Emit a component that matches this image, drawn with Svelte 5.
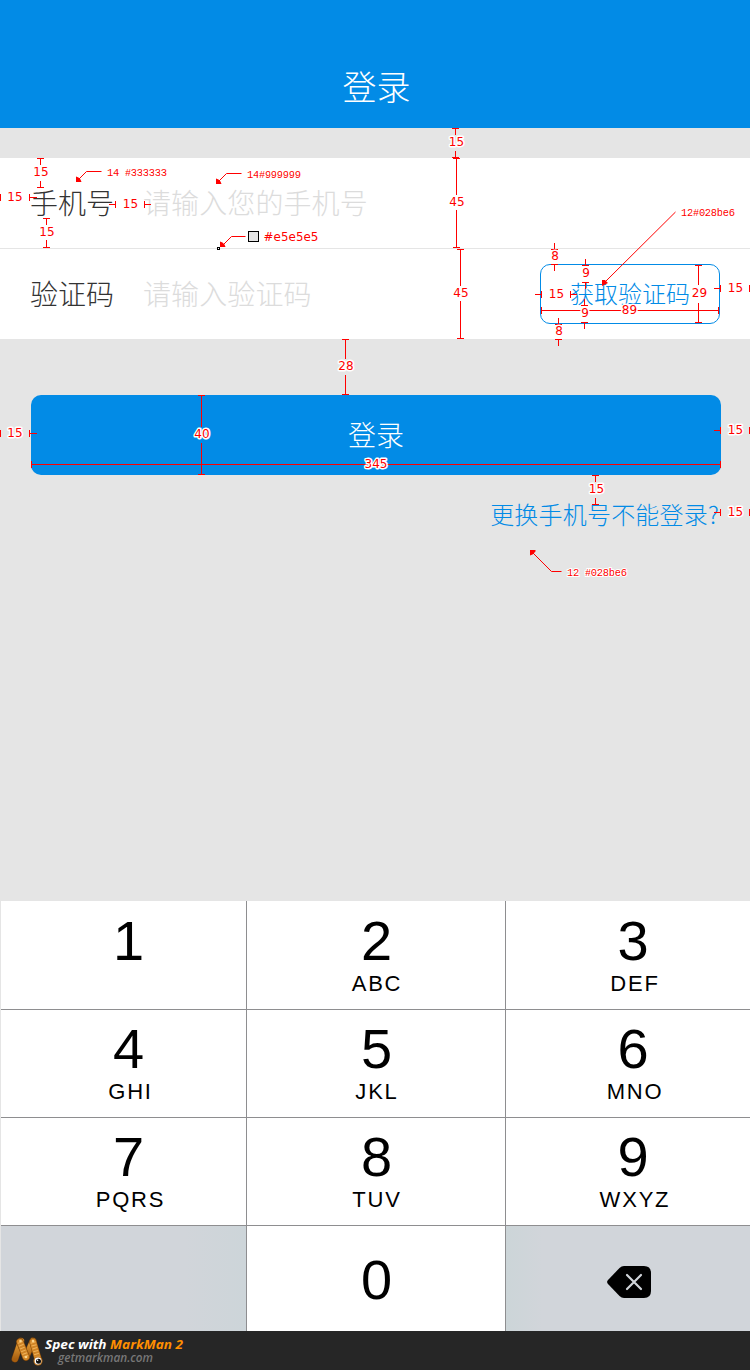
<script>
  const keys = [
    ['1', ''], ['2', 'ABC'], ['3', 'DEF'],
    ['4', 'GHI'], ['5', 'JKL'], ['6', 'MNO'],
    ['7', 'PQRS'], ['8', 'TUV'], ['9', 'WXYZ'],
  ];

  // Horizontal ticks and bars: [x, y, width, height]
  const strokes = [
    [37, 158, 7, 1], [40, 158, 1, 7], [40, 181, 1, 7], [37, 187, 7, 1],
    [0, 194, 1, 7], [29, 194, 1, 7], [29, 197, 8, 1],
    [109, 204, 7, 1], [115, 201, 1, 7], [144, 201, 1, 7], [144, 204, 7, 1],
    [43, 218, 7, 1], [46, 218, 1, 7], [46, 240, 1, 8], [43, 247, 7, 1],
    [452, 128, 7, 1], [455, 128, 1, 7], [455, 151, 1, 7], [452, 157, 7, 1],
    [453, 158, 7, 1], [456, 158, 1, 37], [456, 210, 1, 38], [453, 247, 7, 1],
    [457, 249, 7, 1], [460, 249, 1, 37], [460, 301, 1, 38], [457, 338, 7, 1],
    [554, 243, 1, 7], [551, 249, 7, 1], [551, 264, 7, 1], [554, 264, 1, 7],
    [585, 259, 1, 7], [582, 265, 7, 1], [582, 282, 7, 1], [585, 282, 1, 7],
    [584, 299, 1, 7], [581, 305, 7, 1], [581, 322, 7, 1], [584, 322, 1, 7],
    [558, 318, 1, 7], [555, 324, 7, 1], [555, 339, 7, 1], [558, 339, 1, 7],
    [535, 294, 7, 1], [541, 291, 1, 7], [570, 291, 1, 7], [570, 294, 7, 1],
    [541, 307, 1, 7], [541, 310, 178, 1], [718, 307, 1, 7],
    [695, 265, 7, 1], [698, 265, 1, 20], [698, 303, 1, 20], [695, 322, 7, 1],
    [714, 288, 7, 1], [720, 285, 1, 7], [749, 285, 1, 7],
    [342, 339, 7, 1], [345, 339, 1, 20], [345, 375, 1, 20], [342, 394, 7, 1],
    [198, 395, 7, 1], [201, 396, 1, 31], [201, 443, 1, 31], [198, 474, 7, 1],
    [31, 461, 1, 7], [31, 464, 690, 1], [720, 461, 1, 7],
    [0, 430, 1, 7], [29, 430, 1, 7], [29, 433, 8, 1],
    [714, 430, 7, 1], [720, 427, 1, 7], [749, 427, 1, 7],
    [592, 475, 7, 1], [595, 475, 1, 7], [595, 498, 1, 7], [592, 504, 7, 1],
    [714, 512, 7, 1], [720, 509, 1, 7], [749, 509, 1, 7],
  ];

  // Dimension values: [centre x, baseline, text]
  const values = [
    [41, 176, 15], [15, 201, 15], [130.5, 208, 15], [47, 236, 15],
    [456.5, 146, 15], [457, 206, 45], [461, 297, 45],
    [555, 260, 8], [586, 277, 9], [585, 317, 9], [559, 335, 8],
    [556.5, 298, 15], [629.5, 314, 89], [699.5, 297, 29], [735.5, 292, 15],
    [346, 370, 28], [202, 438, 40], [376, 468, 345],
    [15, 437, 15], [735.5, 434, 15], [596.5, 493, 15], [735.5, 516, 15],
  ];

  // Type notes: [x, baseline, width, text]
  const notes = [
    [107, 176, 60, '14 #333333'],
    [247, 178, 54, '14#999999'],
    [681, 216, 54, '12#028be6'],
    [567, 576, 60, '12 #028be6'],
  ];
</script>

<div class="page">
  <header>登录</header>

  <section class="form">
    <div class="row">
      <span class="label">手机号</span>
      <span class="hint">请输入您的手机号</span>
    </div>
    <div class="row">
      <span class="label">验证码</span>
      <span class="hint">请输入验证码</span>
      <button class="code">获取验证码</button>
    </div>
  </section>

  <button class="login">登录</button>
  <a class="help" href="#help">更换手机号不能登录?</a>

  <section class="keypad">
    {#each keys as [digit, letters]}
      <div class="key"><b>{digit}</b><i>{letters}</i></div>
    {/each}
    <div class="key blank"></div>
    <div class="key zero"><b>0</b></div>
    <div class="key blank del">
      <svg width="44" height="32" viewBox="0 0 44 32">
        <path d="M17 0H37Q44 0 44 7V25Q44 32 37 32H17Q14.500 32 12.500 30L1 18Q-.8 16 1 14L12.500 2Q14.500 0 17 0Z" />
        <path class="cross" d="M20 9L34 23M34 9L20 23" />
      </svg>
    </div>
  </section>

  <footer>
    <svg class="logo" width="32" height="29" viewBox="0 0 32 29">
      <defs>
        <linearGradient id="worm" x1="0" y1="0" x2="0" y2="1">
          <stop offset="0" stop-color="#e9a53c" />
          <stop offset="1" stop-color="#a85f10" />
        </linearGradient>
      </defs>
      <g fill="none" stroke-linecap="round">
        <path d="M4 22L10 4M22 4L15 20" stroke="#7a420a" stroke-width="7" />
        <path d="M4 22L10 4" stroke="url(#worm)" stroke-width="6" />
        <path d="M15 20L22 4" stroke="url(#worm)" stroke-width="6" />
        <path d="M9 5L15 20M22 5L27 22" stroke="#7a420a" stroke-width="7.500" />
        <path d="M9 5L15 20M22 5L27 22" stroke="#cf8426" stroke-width="6.500" />
        <path d="M9 5L15 20M22 5L27 22" stroke="#efb25a" stroke-width="5" stroke-dasharray="1 2" stroke-linecap="butt" />
      </g>
      <circle cx="9.500" cy="4" r="1.300" fill="#fbd58c" />
      <circle cx="22" cy="4" r="1.300" fill="#fbd58c" />
      <circle cx="15" cy="20" r="1.300" fill="#fbd58c" />
      <circle cx="27" cy="24" r="4.500" fill="#b56c18" />
      <circle cx="27" cy="24" r="3.400" fill="#fff" />
      <circle cx="27.500" cy="24.300" r="2.500" fill="#111" />
      <circle cx="26.600" cy="23.300" r=".7" fill="#fff" />
    </svg>
    <div class="credit">
      <svg width="150" height="32">
        <text x="2" y="13" class="spec" textLength="138" lengthAdjust="spacingAndGlyphs">Spec with <tspan>MarkMan 2</tspan></text>
        <text x="15" y="25.500" class="site" textLength="95" lengthAdjust="spacingAndGlyphs">getmarkman.com</text>
      </svg>
    </div>
  </footer>

  <svg class="spec-layer" width="750" height="600">
    <g shape-rendering="crispEdges">
      {#each strokes as [x, y, w, h]}
        <rect {x} {y} width={w} height={h} />
      {/each}
    </g>
    <g class="leader">
      <path d="M101.500 171.500H86.500L79 179M241.500 173.500H226.500L219 181M245.500 236.500H231.500L223 245M675.500 212L605 282M561.500 571.500H551.500L533 553" />
    </g>
    <path d="M76 176.500V182H81.500L80.500 179.500L78.500 177.500ZM216 178.500V184H221.500L220.500 181.500L218.500 179.500ZM220 241.500V247H225.500L224.500 244.500L222.500 242.500ZM602 280V286L608 283L605 280ZM530 550V555.500L532.500 554.500L535.500 551.500V550Z" />
    <rect class="box" x="248.500" y="231.500" width="10" height="10" />
    <rect class="box dot" x="217.500" y="247.500" width="2" height="2" />
    {#each values as [x, y, t]}
      <text class="value" {x} {y}>{t}</text>
    {/each}
    <text class="value start" x="263.500" y="241" textLength="55">#e5e5e5</text>
    {#each notes as [x, y, w, t]}
      <text class="note" {x} {y} textLength={w}>{t}</text>
    {/each}
  </svg>
</div>

<style>
  :global(body) { margin: 0; background: #e5e5e5; }
  .page {
    position: relative;
    display: flex;
    flex-direction: column;
    width: 750px;
    height: 1370px;
    overflow: hidden;
    background: #e5e5e5;
    font-family: "Noto Sans CJK SC", sans-serif;
    font-weight: 300;
  }
  header {
    height: 128px;
    box-sizing: border-box;
    padding: 46px 0 0 3px;
    line-height: 80px;
    text-align: center;
    color: #fff;
    background: #028be6;
    font-size: 34px;
  }
  .form { margin-top: 30px; background: #fff; }
  .row {
    display: flex;
    align-items: center;
    height: 90px;
    padding: 0 30px;
    font-size: 28px;
    line-height: 38px;
  }
  .row + .row { border-top: 1px solid #e5e5e5; }
  .label, .hint { padding-bottom: 2px; }
  .label { width: 113px; color: #333; }
  .hint { flex: 1; color: #dcdcdc; letter-spacing: .1px; }
  button { font-family: inherit; font-weight: inherit; cursor: pointer; }
  .code {
    width: 180px;
    height: 60px;
    padding: 0 0 4px;
    border: 1px solid #028be6;
    border-radius: 10px;
    background: #fff;
    color: #028be6;
    font-size: 24px;
  }
  .login {
    flex: none;
    width: 690px;
    height: 80px;
    margin: 56px 0 0 31px;
    padding: 0 0 2px;
    border: 0;
    border-radius: 10px;
    color: #fff;
    background: #028be6;
    font-size: 28px;
  }
  .help {
    align-self: flex-end;
    margin: 21px 31px 0 0;
    color: #028be6;
    font-size: 24px;
    line-height: 36px;
    letter-spacing: .2px;
    text-decoration: none;
  }
  .keypad {
    display: grid;
    grid-template-columns: 245px 258px 244px;
    grid-template-rows: 108px 107px 107px 105px;
    gap: 1px;
    margin: auto 0 0 1px;
    background: #8e8e90;
    font-family: "Liberation Sans", Arial, sans-serif;
    font-weight: 400;
  }
  .key {
    display: flex;
    flex-direction: column;
    align-items: center;
    box-sizing: border-box;
    padding: 9px 0 0 10px;
    background: #fff;
  }
  .key:nth-child(-n + 3) { padding-top: 10px; }
  .key:nth-child(3n + 2) { padding-left: 1px; }
  .key b { font-size: 56px; line-height: 60px; font-weight: 400; }
  .key i { margin-top: 1px; font-size: 22px; line-height: 24px; font-style: normal; letter-spacing: 1.8px; padding-left: 4px; }
  .key:nth-child(3n + 2) i { padding-left: 1px; }
  .key.zero { padding-top: 24px; }
  .key.blank { background: #d1d5da; }
  .key.blank:not(.del) { background: linear-gradient(90deg, #d1d5da 75%, #cdd5d9); }
  .key.del { background: linear-gradient(90deg, #ccd5d8, #d1d5da 15%); padding: 40px 0 0 1px; }
  .cross { fill: none; stroke: #d1d5da; stroke-width: 2.2; stroke-linecap: round; }
  footer {
    display: flex;
    flex: none;
    height: 39px;
    background: #262626;
  }
  .logo { margin: 6px 0 0 11px; }
  .credit { padding-top: 5px; }
  .spec, .site { font: italic 700 13px "Open Sans", sans-serif; fill: #fff; }
  .spec tspan { fill: #ff8f00; }
  .site { font-weight: 600; font-size: 12px; fill: #777; }
  .spec-layer { position: absolute; left: 0; top: 0; fill: #f00; pointer-events: none; }
  .leader { fill: none; stroke: #f00; stroke-width: 1; }
  .box { fill: #e5e5e5; stroke: #000; stroke-width: 1; }
  .dot { fill: #fff; }
  .value {
    font: 400 12px "DejaVu Sans", sans-serif;
    text-anchor: middle;
    fill: #f00;
    stroke: #fff;
    stroke-width: 3px;
    stroke-linejoin: round;
    paint-order: stroke;
  }
  .start { text-anchor: start; }
  .note {
    font: 400 10.5px "Liberation Mono", monospace;
    fill: #f00;
    stroke: #fff;
    stroke-width: 2px;
    paint-order: stroke;
  }
</style>
